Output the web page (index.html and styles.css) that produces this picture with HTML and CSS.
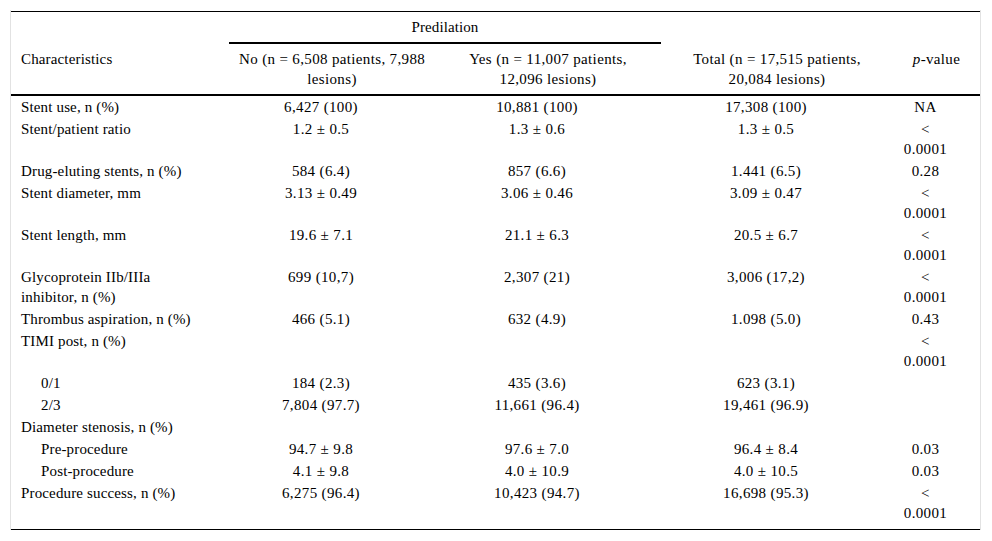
FILE: index.html
```html
<!DOCTYPE html>
<html lang="en">
<head>
<meta charset="utf-8">
<title>Predilation table</title>
<link rel="stylesheet" href="styles.css">
</head>
<body>
<div class="frame">
  <table class="data">
    <colgroup>
      <col class="c1"><col class="c2"><col class="c3"><col class="c4"><col class="c5">
    </colgroup>
    <thead>
      <tr>
        <th class="blank"></th>
        <th class="group" colspan="2">Predilation</th>
        <th class="blank"></th>
        <th class="blank"></th>
      </tr>
      <tr class="sub">
        <th class="label">Characteristics</th>
        <th>No (n = 6,508 patients, 7,988<br>lesions)</th>
        <th>Yes (n = 11,007 patients,<br>12,096 lesions)</th>
        <th>Total (n = 17,515 patients,<br>20,084 lesions)</th>
        <th><i>p</i>-value</th>
      </tr>
    </thead>
    <tbody>
      <tr><td class="label">Stent use, n (%)</td><td>6,427 (100)</td><td>10,881 (100)</td><td>17,308 (100)</td><td>NA</td></tr>
      <tr><td class="label">Stent/patient ratio</td><td>1.2 ± 0.5</td><td>1.3 ± 0.6</td><td>1.3 ± 0.5</td><td>&lt;<br>0.0001</td></tr>
      <tr><td class="label">Drug-eluting stents, n (%)</td><td>584 (6.4)</td><td>857 (6.6)</td><td>1.441 (6.5)</td><td>0.28</td></tr>
      <tr><td class="label">Stent diameter, mm</td><td>3.13 ± 0.49</td><td>3.06 ± 0.46</td><td>3.09 ± 0.47</td><td>&lt;<br>0.0001</td></tr>
      <tr><td class="label">Stent length, mm</td><td>19.6 ± 7.1</td><td>21.1 ± 6.3</td><td>20.5 ± 6.7</td><td>&lt;<br>0.0001</td></tr>
      <tr><td class="label">Glycoprotein IIb/IIIa<br>inhibitor, n (%)</td><td>699 (10,7)</td><td>2,307 (21)</td><td>3,006 (17,2)</td><td>&lt;<br>0.0001</td></tr>
      <tr><td class="label">Thrombus aspiration, n (%)</td><td>466 (5.1)</td><td>632 (4.9)</td><td>1.098 (5.0)</td><td>0.43</td></tr>
      <tr><td class="label">TIMI post, n (%)</td><td></td><td></td><td></td><td>&lt;<br>0.0001</td></tr>
      <tr><td class="label indent">0/1</td><td>184 (2.3)</td><td>435 (3.6)</td><td>623 (3.1)</td><td></td></tr>
      <tr><td class="label indent">2/3</td><td>7,804 (97.7)</td><td>11,661 (96.4)</td><td>19,461 (96.9)</td><td></td></tr>
      <tr><td class="label">Diameter stenosis, n (%)</td><td></td><td></td><td></td><td></td></tr>
      <tr><td class="label indent">Pre-procedure</td><td>94.7 ± 9.8</td><td>97.6 ± 7.0</td><td>96.4 ± 8.4</td><td>0.03</td></tr>
      <tr><td class="label indent">Post-procedure</td><td>4.1 ± 9.8</td><td>4.0 ± 10.9</td><td>4.0 ± 10.5</td><td>0.03</td></tr>
      <tr class="last"><td class="label">Procedure success, n (%)</td><td>6,275 (96.4)</td><td>10,423 (94.7)</td><td>16,698 (95.3)</td><td>&lt;<br>0.0001</td></tr>
    </tbody>
  </table>
</div>
</body>
</html>
```
FILE: styles.css
```css
html, body {
  margin: 0;
  padding: 0;
  background: #ffffff;
}

body {
  font-family: "Liberation Serif", "Times New Roman", serif;
  font-size: 15px;
  line-height: 20px;
  color: #000000;
}

.frame {
  width: 969px;
  margin: 10px 0 0 10px;
  padding-top: 1px;
  border-left: 1px solid #e2e2e2;
  border-right: 1px solid #e2e2e2;
}

.data {
  width: 969px;
  table-layout: fixed;
  border-collapse: separate;
  border-spacing: 0;
  border-top: 1px solid #000000;
  border-bottom: 1px solid #000000;
}

.c1 { width: 218px; }
.c2 { width: 206px; }
.c3 { width: 226px; }
.c4 { width: 232px; }
.c5 { width: 87px; }

.data th {
  font-weight: normal;
  text-align: center;
  vertical-align: top;
  padding: 5px 10px;
  letter-spacing: 0.35px;
  white-space: nowrap;
}

.data th.group {
  border-bottom: 2px solid #000000;
  letter-spacing: 0.1px;
}

.data tr.sub th {
  border-bottom: 2px solid #000000;
}

.data td {
  text-align: center;
  vertical-align: top;
  padding: 1px 22px 1px 0;
  letter-spacing: 0.35px;
}

.data th.label,
.data td.label {
  text-align: left;
  padding-left: 10px;
  padding-right: 10px;
  letter-spacing: 0.15px;
}

.data td.indent {
  padding-left: 30px;
}

.data tr.last td {
  padding-bottom: 6px;
}
```
